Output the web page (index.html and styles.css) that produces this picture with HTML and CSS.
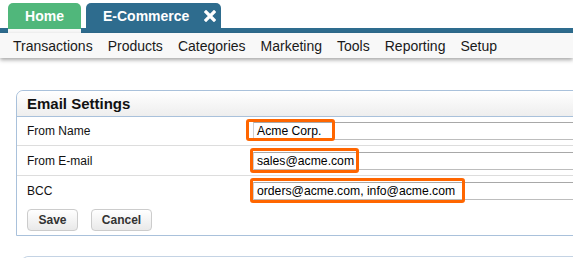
FILE: index.html
```html
<!DOCTYPE html>
<html>
<head>
<meta charset="utf-8">
<link rel="stylesheet" href="styles.css">
</head>
<body>
<div class="topbar">
  <div class="tab tab-home">Home</div>
  <div class="tab tab-active">E-Commerce
    <svg class="close" width="12" height="12" viewBox="0 0 12 12"><path d="M2 2 L10 10 M10 2 L2 10" stroke="#fff" stroke-width="3.2" stroke-linecap="square"/></svg>
  </div>
</div>
<nav class="menu">
  <span>Transactions</span><span>Products</span><span>Categories</span><span>Marketing</span><span>Tools</span><span>Reporting</span><span>Setup</span>
</nav>
<section class="panel">
  <div class="panel-head">Email Settings</div>
  <div class="row">
    <label>From Name</label>
    <div class="field"><div class="input">Acme Corp.</div><span class="mark mark1"></span></div>
  </div>
  <div class="row">
    <label>From E-mail</label>
    <div class="field"><div class="input">sales@acme.com</div><span class="mark mark2"></span></div>
  </div>
  <div class="row last">
    <label>BCC</label>
    <div class="field"><div class="input">orders@acme.com, info@acme.com</div><span class="mark mark3"></span></div>
  </div>
  <div class="actions">
    <button class="btn btn-save">Save</button>
    <button class="btn btn-cancel">Cancel</button>
  </div>
</section>
<section class="panel2"></section>
</body>
</html>
```
FILE: styles.css
```css
html, body { margin: 0; padding: 0; overflow: hidden; background: #fff; }
body { font-family: "Liberation Sans", Arial, sans-serif; width: 573px; height: 258px; }

.topbar {
  height: 28px;
  border-bottom: 5px solid #2e6c8e;
  display: flex;
  align-items: flex-end;
  padding-left: 8px;
  gap: 5px;
}
.tab {
  color: #fff;
  font-weight: bold;
  font-size: 14px;
  border-radius: 5px 5px 0 0;
  margin-bottom: -5px;
  box-sizing: border-box;
}
.tab-home {
  width: 73px;
  height: 30px;
  background: #50b77b;
  border-bottom: 4px solid #f8f8f8;
  text-align: center;
  line-height: 26px;
}
.tab-active {
  width: 135px;
  height: 30px;
  background: #2e6c8e;
  padding-left: 17px;
  line-height: 26px;
  display: flex;
  align-items: flex-start;
}
.close { margin-left: 15px; margin-top: 7px; }

.menu {
  height: 25px;
  background: #f8f8f8;
  box-shadow: 0 2px 4px rgba(0,0,0,0.35);
  display: flex;
  align-items: center;
  gap: 15px;
  padding-left: 13px;
  font-size: 14px;
  color: #1a1a1a;
  position: relative;
}

.panel {
  margin: 32px 0 0 16px;
  width: 620px;
  border: 1px solid #a9c1db;
  border-top-left-radius: 7px;
  box-sizing: border-box;
}
.panel-head {
  height: 25px;
  line-height: 25px;
  padding-left: 10px;
  font-size: 15px;
  font-weight: bold;
  color: #111;
  background: linear-gradient(#ffffff, #eeeeee);
  border-bottom: 1px solid #a9c1db;
  border-top-left-radius: 7px;
}
.row {
  display: grid;
  grid-template-columns: 226px 1fr;
  align-items: center;
  height: 29px;
  box-sizing: border-box;
  padding-left: 10px;
  border-bottom: 1px solid #dddddd;
  font-size: 12px;
  color: #111;
}
.row + .row { height: 30px; }
.row.last { border-bottom: none; height: 29px; }
.field { position: relative; }
.input {
  height: 18px;
  box-sizing: border-box;
  border-top: 1px solid #a8a8a8;
  border-bottom: 1px solid #bdbdbd;
  border-left: 1px solid #cfcfcf;
  padding-left: 3px;
  line-height: 16px;
  font-size: 12.2px;
  color: #000;
  background: #fff;
}
.mark {
  position: absolute;
  border: 3px solid #ff6600;
  border-radius: 3px;
  box-sizing: border-box;
}
.mark1 { left: -7px; top: -3px; width: 89px; height: 22px; }
.mark2 { left: -3px; top: -4px; width: 109px; height: 25px; }
.mark3 { left: -3px; top: -4px; width: 215px; height: 25px; }

.actions {
  display: flex;
  gap: 13px;
  padding: 4px 0 4px 10px;
}
.btn {
  font-family: "Liberation Sans", Arial, sans-serif;
  font-weight: bold;
  font-size: 12px;
  color: #333;
  height: 22px;
  padding: 0;
  text-align: center;
  background: linear-gradient(#ffffff, #e9e9e9);
  border: 1px solid #cccccc;
  border-radius: 4px;
}
.btn-save { width: 51px; }
.btn-cancel { width: 61px; }

.panel2 {
  margin: 20px 0 0 22px;
  height: 20px;
  border-top: 1px solid #c4d3e4;
  border-left: 1px solid #c4d3e4;
  border-top-left-radius: 6px;
}
```
